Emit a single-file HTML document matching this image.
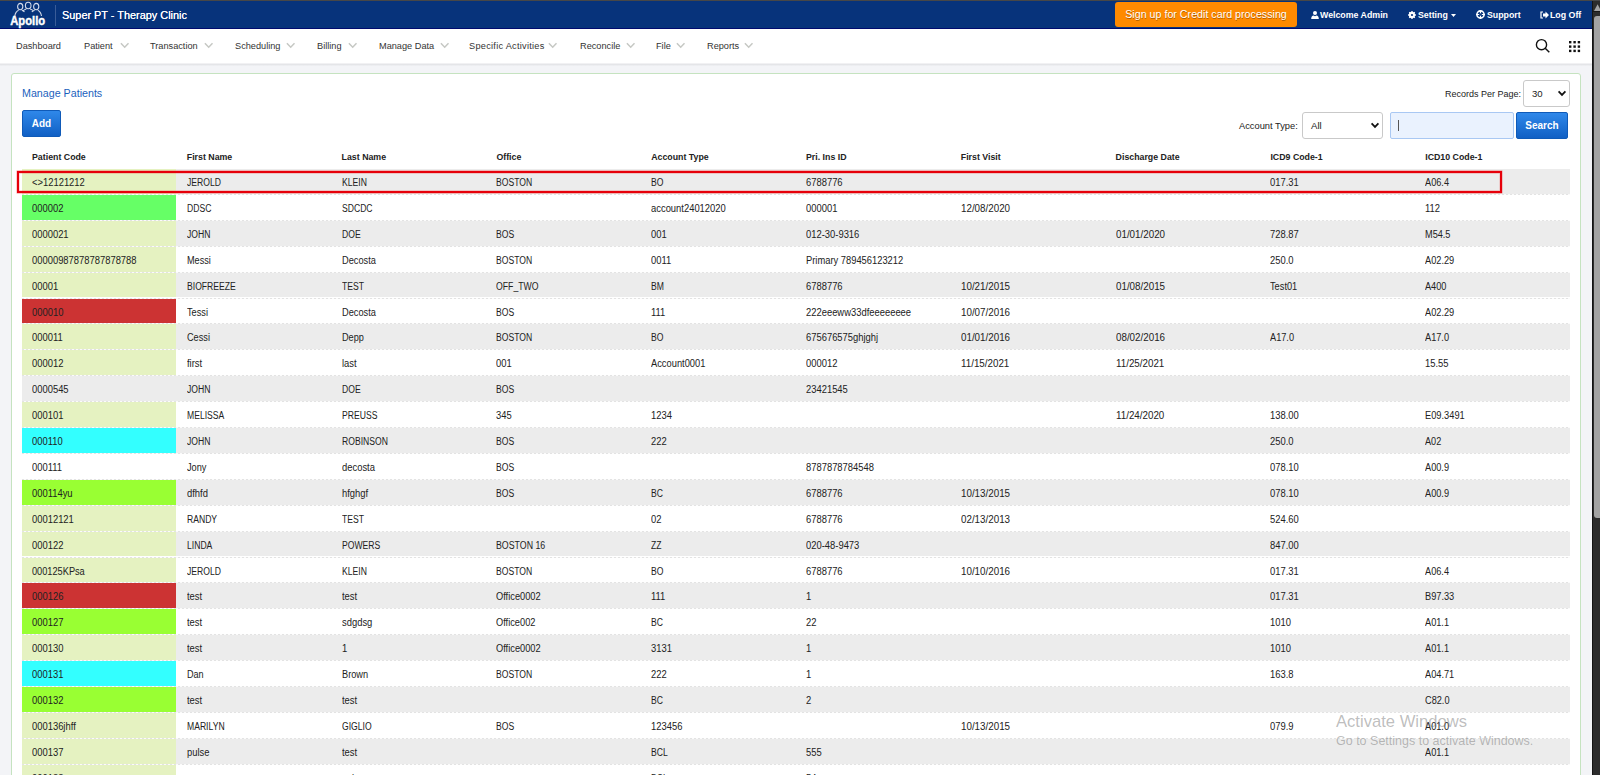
<!DOCTYPE html>
<html><head><meta charset="utf-8">
<style>
*{box-sizing:border-box;margin:0;padding:0}
html,body{width:1600px;height:775px;overflow:hidden;background:#f3f4f7;font-family:"Liberation Sans",sans-serif;color:#222}
.abs{position:absolute}
#topline{left:0;top:0;width:1600px;height:1px;background:#474747;z-index:6}
#hdr{left:0;top:1px;width:1592px;height:27px;background:#07337b}
#hdrline{left:0;top:28px;width:1592px;height:1px;background:#000a6e}
#sep{left:55px;top:5px;width:1px;height:21px;background:#3a5c98}
#title{left:62px;top:9px;font-size:10.9px;color:#fff;white-space:nowrap;line-height:13px;text-shadow:0 0 0.4px #fff}
#orange{left:1115px;top:2px;width:182px;height:25px;background:#ff8a00;border-radius:3px;color:#fff;font-size:10.7px;line-height:25px;text-shadow:0 0.5px 0.5px rgba(0,0,0,0.35);text-align:center;white-space:nowrap}
.hi{position:absolute;top:9.5px;color:#fff;font-size:8.8px;font-weight:bold;line-height:11px;white-space:nowrap}
#nav{left:0;top:29px;width:1592px;height:34px;background:#fff}
#navshadow{left:0;top:63px;width:1592px;height:3px;background:linear-gradient(#f7f7f8,#e4e5e8 50%,#f1f2f5)}
.navi{position:absolute;top:40px;font-size:9.2px;color:#333;white-space:nowrap;line-height:12px}
.chev{position:absolute;top:41.6px}
#sb{left:1592px;top:0;width:8px;height:775px;background:#2c2c2c;border-left:1px solid #141414}
#thumb{left:1594px;top:15.5px;width:6px;height:502px;background:#a3a3a3;border-radius:3px 0 0 3px}
#panel{left:11px;top:73px;width:1570px;height:760px;background:#fff;border:1px solid #c5e3c0;border-radius:3px}
#mp{left:22px;top:87px;font-size:10.7px;color:#1c5fbd;line-height:13px;white-space:nowrap}
.btn{position:absolute;height:26px;border-radius:2px;background:linear-gradient(#2f88ea,#1160c4);color:#fff;font-weight:bold;font-size:10px;text-align:center;line-height:26px;border:1px solid #0f5ab8}
.lbl{position:absolute;font-size:9.3px;color:#222;white-space:nowrap;line-height:11px}
.sel{position:absolute;height:26px;border:1px solid #c9c9c9;border-radius:3px;background:#fff;font-size:9.6px;color:#222;line-height:25px;padding-left:8px}
.sel svg{position:absolute;right:2px;top:9px}
#inp{left:1390px;top:112px;width:124px;height:26.5px;background:#eaf2fe;border:1px solid #a9c8f3;border-radius:2px}
#caret{left:1398px;top:120px;width:1px;height:11px;background:#555}
#tbl{left:22px;top:0;width:1548px}
.th{position:absolute;top:151.5px;font-size:8.8px;font-weight:bold;color:#222;white-space:nowrap;line-height:11px}
.tr{position:absolute;left:22px;width:1548px;height:25.9px;background:#fff}
.tr::after{content:"";position:absolute;left:0;top:0;width:100%;height:1px;background:repeating-linear-gradient(90deg,#e3e3e3 0 2px,#fbfbfb 2px 4px);z-index:2}
.tr.g{background:#ececec}
.tr.first::after{background:#fff}
.td{position:absolute;top:0;height:25.9px;line-height:29px;padding-left:10px;font-size:10px;color:#222;white-space:nowrap}
.td span{display:inline-block;transform-origin:0 50%}
.td.c0{left:0;width:154px}
#redbox{z-index:3;left:17px;top:171px;width:1485px;height:22px;border:2px solid #e6000a;box-shadow:0 0 0.6px 0.4px rgba(235,40,40,0.55),inset 0 0 0.6px 0.4px rgba(235,40,40,0.4)}
#wm1{left:1336px;top:712px;font-size:16.6px;z-index:5;color:rgba(110,110,110,0.45);white-space:nowrap;line-height:19px}
#wm2{left:1336px;top:734px;font-size:12.5px;z-index:5;color:rgba(110,110,110,0.45);white-space:nowrap;line-height:14px}
</style></head><body>
<div class="abs" id="topline"></div>
<div class="abs" id="hdr"></div>
<div class="abs" id="hdrline"></div>
<svg class="abs" style="left:8px;top:1px" width="40" height="28" viewBox="0 0 40 28">
 <g fill="none" stroke="#d0d8e8" stroke-width="1.1">
  <ellipse cx="12.2" cy="5.6" rx="2.6" ry="3.2"/><ellipse cx="20.2" cy="4.5" rx="2.8" ry="3.3"/><ellipse cx="28.2" cy="5.6" rx="2.6" ry="3.2"/>
  <path d="M10.6 9.2 Q7.5 10.5 6.8 15 M13.8 9.2 Q15.5 9.8 16.5 11 M18.3 8 Q16 8.8 15 10 M22.1 8 Q24.5 8.8 25.4 10 M26.6 9.2 Q24.8 9.8 23.8 11 M29.8 9.2 Q32.8 10.5 33.5 15"/>
 </g>
 <text x="2.2" y="24.3" style="font-family:'Liberation Sans';font-weight:bold" font-size="13.6" fill="#fff" stroke="#fff" stroke-width="0.45" textLength="35" lengthAdjust="spacingAndGlyphs">Apollo</text>
</svg>
<div class="abs" id="sep"></div>
<div class="abs" id="title">Super PT - Therapy Clinic</div>
<div class="abs" id="orange">Sign up for Credit card processing</div>
<svg class="abs" style="left:1311px;top:10.5px" width="8" height="8" viewBox="0 0 8 8"><circle cx="4" cy="2.1" r="2" fill="#fff"/><path d="M0.2 8 Q0.2 4.6 2.6 4.4 L4 5.2 L5.4 4.4 Q7.8 4.6 7.8 8Z" fill="#fff"/></svg>
<div class="hi" style="left:1320px">Welcome Admin</div>
<svg class="abs" style="left:1408px;top:10.5px" width="8" height="8" viewBox="0 0 8 8"><circle cx="4" cy="4" r="2.3" fill="none" stroke="#fff" stroke-width="1.7"/><g stroke="#fff" stroke-width="1.3"><path d="M4 0.1V7.9M0.1 4H7.9M1.25 1.25L6.75 6.75M6.75 1.25L1.25 6.75"/></g><circle cx="4" cy="4" r="1.1" fill="#07337b"/></svg>
<div class="hi" style="left:1418px">Setting</div>
<svg class="abs" style="left:1451px;top:14px" width="5" height="3" viewBox="0 0 5 3"><path d="M0 0H5L2.5 3Z" fill="#fff"/></svg>
<svg class="abs" style="left:1476px;top:10px" width="9" height="9" viewBox="0 0 9 9"><circle cx="4.5" cy="4.5" r="3.6" fill="none" stroke="#fff" stroke-width="1.6"/><path d="M4.5 0V9M0 4.5H9" stroke="#fff" stroke-width="1.2"/><circle cx="4.5" cy="4.5" r="1.3" fill="#07337b"/></svg>
<div class="hi" style="left:1487px">Support</div>
<svg class="abs" style="left:1540px;top:11px" width="9" height="8" viewBox="0 0 9 8"><path d="M3 1H1V7H3" fill="none" stroke="#fff" stroke-width="1.2"/><path d="M3 2.5H5.5V0.5L9 4L5.5 7.5V5.5H3Z" fill="#fff"/></svg>
<div class="hi" style="left:1550px">Log Off</div>

<div class="abs" id="nav"></div>
<div class="abs" id="navshadow"></div>
<div class="navi" style="left:16px">Dashboard</div>
<div class="navi" style="left:84px">Patient</div>
<div class="navi" style="left:150px">Transaction</div>
<div class="navi" style="left:235px">Scheduling</div>
<div class="navi" style="left:317px">Billing</div>
<div class="navi" style="left:379px">Manage Data</div>
<div class="navi" style="left:469px;letter-spacing:0.27px">Specific Activities</div>
<div class="navi" style="left:580px">Reconcile</div>
<div class="navi" style="left:656px">File</div>
<div class="navi" style="left:707px">Reports</div>
<svg class="chev" style="left:120px" width="10" height="7" viewBox="0 0 10 7"><path d="M0.9 1.2L4.7 5.2L8.5 1.2" fill="none" stroke="#c6c8c4" stroke-width="1.5"/></svg>
<svg class="chev" style="left:204px" width="10" height="7" viewBox="0 0 10 7"><path d="M0.9 1.2L4.7 5.2L8.5 1.2" fill="none" stroke="#c6c8c4" stroke-width="1.5"/></svg>
<svg class="chev" style="left:286px" width="10" height="7" viewBox="0 0 10 7"><path d="M0.9 1.2L4.7 5.2L8.5 1.2" fill="none" stroke="#c6c8c4" stroke-width="1.5"/></svg>
<svg class="chev" style="left:348px" width="10" height="7" viewBox="0 0 10 7"><path d="M0.9 1.2L4.7 5.2L8.5 1.2" fill="none" stroke="#c6c8c4" stroke-width="1.5"/></svg>
<svg class="chev" style="left:440px" width="10" height="7" viewBox="0 0 10 7"><path d="M0.9 1.2L4.7 5.2L8.5 1.2" fill="none" stroke="#c6c8c4" stroke-width="1.5"/></svg>
<svg class="chev" style="left:548px" width="10" height="7" viewBox="0 0 10 7"><path d="M0.9 1.2L4.7 5.2L8.5 1.2" fill="none" stroke="#c6c8c4" stroke-width="1.5"/></svg>
<svg class="chev" style="left:626px" width="10" height="7" viewBox="0 0 10 7"><path d="M0.9 1.2L4.7 5.2L8.5 1.2" fill="none" stroke="#c6c8c4" stroke-width="1.5"/></svg>
<svg class="chev" style="left:676px" width="10" height="7" viewBox="0 0 10 7"><path d="M0.9 1.2L4.7 5.2L8.5 1.2" fill="none" stroke="#c6c8c4" stroke-width="1.5"/></svg>
<svg class="chev" style="left:744px" width="10" height="7" viewBox="0 0 10 7"><path d="M0.9 1.2L4.7 5.2L8.5 1.2" fill="none" stroke="#c6c8c4" stroke-width="1.5"/></svg>
<svg class="abs" style="left:1535px;top:38px" width="16" height="16" viewBox="0 0 16 16"><circle cx="6.5" cy="6.7" r="5.1" fill="none" stroke="#111" stroke-width="1.4"/><path d="M10.2 10.3L14.3 14.2" stroke="#111" stroke-width="1.5"/></svg>
<svg class="abs" style="left:1569px;top:41px" width="12" height="12" viewBox="0 0 12 12" fill="#111"><rect x="0" y="0" width="2.4" height="2.4"/><rect x="4.4" y="0" width="2.4" height="2.4"/><rect x="8.7" y="0" width="2.4" height="2.4"/><rect x="0" y="4.4" width="2.4" height="2.4"/><rect x="4.4" y="4.4" width="2.4" height="2.4"/><rect x="8.7" y="4.4" width="2.4" height="2.4"/><rect x="0" y="8.7" width="2.4" height="2.4"/><rect x="4.4" y="8.7" width="2.4" height="2.4"/><rect x="8.7" y="8.7" width="2.4" height="2.4"/></svg>

<div class="abs" id="panel"></div>
<div class="abs" id="mp">Manage Patients</div>
<div class="btn" style="left:22px;top:110px;width:39px;height:27px">Add</div>
<div class="lbl" style="left:1445px;top:89px;font-size:9px">Records Per Page:</div>
<div class="sel" style="left:1523px;top:80px;width:47px;height:26.5px">30<svg width="10" height="7" viewBox="0 0 10 7"><path d="M1.6 1.4L5 4.9L8.4 1.4" fill="none" stroke="#111" stroke-width="1.8"/></svg></div>
<div class="lbl" style="left:1239px;top:120.5px">Account Type:</div>
<div class="sel" style="left:1302px;top:112px;width:81px;height:26.5px">All<svg width="10" height="7" viewBox="0 0 10 7"><path d="M1.6 1.4L5 4.9L8.4 1.4" fill="none" stroke="#111" stroke-width="1.8"/></svg></div>
<div class="abs" id="inp"></div>
<div class="abs" id="caret"></div>
<div class="btn" style="left:1516px;top:112px;width:52px;height:26.5px">Search</div>

<div class="th" style="left:32.0px">Patient Code</div>
<div class="th" style="left:186.8px">First Name</div>
<div class="th" style="left:341.6px">Last Name</div>
<div class="th" style="left:496.4px">Office</div>
<div class="th" style="left:651.2px">Account Type</div>
<div class="th" style="left:806.0px">Pri. Ins ID</div>
<div class="th" style="left:960.8px">First Visit</div>
<div class="th" style="left:1115.6px">Discharge Date</div>
<div class="th" style="left:1270.4px">ICD9 Code-1</div>
<div class="th" style="left:1425.2px">ICD10 Code-1</div>
<div class="tr g first" style="top:168.0px">
<div class="td c0" style="background:#e5f2c1"><span style="transform:scaleX(0.940)">&lt;&gt;12121212</span></div>
<div class="td" style="left:154.8px"><span style="transform:scaleX(0.860)">JEROLD</span></div>
<div class="td" style="left:309.6px"><span style="transform:scaleX(0.860)">KLEIN</span></div>
<div class="td" style="left:464.4px"><span style="transform:scaleX(0.860)">BOSTON</span></div>
<div class="td" style="left:619.2px"><span style="transform:scaleX(0.860)">BO</span></div>
<div class="td" style="left:774.0px"><span style="transform:scaleX(0.940)">6788776</span></div>
<div class="td" style="left:928.8px"><span style="transform:scaleX(0.940)"></span></div>
<div class="td" style="left:1083.6px"><span style="transform:scaleX(0.940)"></span></div>
<div class="td" style="left:1238.4px"><span style="transform:scaleX(0.940)">017.31</span></div>
<div class="td" style="left:1393.2px"><span style="transform:scaleX(0.920)">A06.4</span></div>
</div>
<div class="tr" style="top:193.9px">
<div class="td c0" style="background:#66ff66"><span style="transform:scaleX(0.940)">000002</span></div>
<div class="td" style="left:154.8px"><span style="transform:scaleX(0.860)">DDSC</span></div>
<div class="td" style="left:309.6px"><span style="transform:scaleX(0.860)">SDCDC</span></div>
<div class="td" style="left:464.4px"><span style="transform:scaleX(0.940)"></span></div>
<div class="td" style="left:619.2px"><span style="transform:scaleX(0.940)">account24012020</span></div>
<div class="td" style="left:774.0px"><span style="transform:scaleX(0.940)">000001</span></div>
<div class="td" style="left:928.8px"><span style="transform:scaleX(0.980)">12/08/2020</span></div>
<div class="td" style="left:1083.6px"><span style="transform:scaleX(0.940)"></span></div>
<div class="td" style="left:1238.4px"><span style="transform:scaleX(0.940)"></span></div>
<div class="td" style="left:1393.2px"><span style="transform:scaleX(0.940)">112</span></div>
</div>
<div class="tr g" style="top:219.8px">
<div class="td c0" style="background:#e5f2c1"><span style="transform:scaleX(0.940)">0000021</span></div>
<div class="td" style="left:154.8px"><span style="transform:scaleX(0.860)">JOHN</span></div>
<div class="td" style="left:309.6px"><span style="transform:scaleX(0.860)">DOE</span></div>
<div class="td" style="left:464.4px"><span style="transform:scaleX(0.860)">BOS</span></div>
<div class="td" style="left:619.2px"><span style="transform:scaleX(0.940)">001</span></div>
<div class="td" style="left:774.0px"><span style="transform:scaleX(0.940)">012-30-9316</span></div>
<div class="td" style="left:928.8px"><span style="transform:scaleX(0.940)"></span></div>
<div class="td" style="left:1083.6px"><span style="transform:scaleX(0.980)">01/01/2020</span></div>
<div class="td" style="left:1238.4px"><span style="transform:scaleX(0.940)">728.87</span></div>
<div class="td" style="left:1393.2px"><span style="transform:scaleX(0.916)">M54.5</span></div>
</div>
<div class="tr" style="top:245.7px">
<div class="td c0" style="background:#e5f2c1"><span style="transform:scaleX(0.940)">00000987878787878788</span></div>
<div class="td" style="left:154.8px"><span style="transform:scaleX(0.914)">Messi</span></div>
<div class="td" style="left:309.6px"><span style="transform:scaleX(0.924)">Decosta</span></div>
<div class="td" style="left:464.4px"><span style="transform:scaleX(0.860)">BOSTON</span></div>
<div class="td" style="left:619.2px"><span style="transform:scaleX(0.940)">0011</span></div>
<div class="td" style="left:774.0px"><span style="transform:scaleX(0.935)">Primary 789456123212</span></div>
<div class="td" style="left:928.8px"><span style="transform:scaleX(0.940)"></span></div>
<div class="td" style="left:1083.6px"><span style="transform:scaleX(0.940)"></span></div>
<div class="td" style="left:1238.4px"><span style="transform:scaleX(0.940)">250.0</span></div>
<div class="td" style="left:1393.2px"><span style="transform:scaleX(0.923)">A02.29</span></div>
</div>
<div class="tr g" style="top:271.6px">
<div class="td c0" style="background:#e5f2c1"><span style="transform:scaleX(0.940)">00001</span></div>
<div class="td" style="left:154.8px"><span style="transform:scaleX(0.860)">BIOFREEZE</span></div>
<div class="td" style="left:309.6px"><span style="transform:scaleX(0.860)">TEST</span></div>
<div class="td" style="left:464.4px"><span style="transform:scaleX(0.869)">OFF_TWO</span></div>
<div class="td" style="left:619.2px"><span style="transform:scaleX(0.860)">BM</span></div>
<div class="td" style="left:774.0px"><span style="transform:scaleX(0.940)">6788776</span></div>
<div class="td" style="left:928.8px"><span style="transform:scaleX(0.980)">10/21/2015</span></div>
<div class="td" style="left:1083.6px"><span style="transform:scaleX(0.980)">01/08/2015</span></div>
<div class="td" style="left:1238.4px"><span style="transform:scaleX(0.924)">Test01</span></div>
<div class="td" style="left:1393.2px"><span style="transform:scaleX(0.917)">A400</span></div>
</div>
<div class="tr" style="top:297.5px">
<div class="td c0" style="background:#cc3333"><span style="transform:scaleX(0.940)">000010</span></div>
<div class="td" style="left:154.8px"><span style="transform:scaleX(0.920)">Tessi</span></div>
<div class="td" style="left:309.6px"><span style="transform:scaleX(0.924)">Decosta</span></div>
<div class="td" style="left:464.4px"><span style="transform:scaleX(0.860)">BOS</span></div>
<div class="td" style="left:619.2px"><span style="transform:scaleX(0.940)">111</span></div>
<div class="td" style="left:774.0px"><span style="transform:scaleX(0.940)">222eeeww33dfeeeeeeee</span></div>
<div class="td" style="left:928.8px"><span style="transform:scaleX(0.980)">10/07/2016</span></div>
<div class="td" style="left:1083.6px"><span style="transform:scaleX(0.940)"></span></div>
<div class="td" style="left:1238.4px"><span style="transform:scaleX(0.940)"></span></div>
<div class="td" style="left:1393.2px"><span style="transform:scaleX(0.923)">A02.29</span></div>
</div>
<div class="tr g" style="top:323.4px">
<div class="td c0" style="background:#e5f2c1"><span style="transform:scaleX(0.940)">000011</span></div>
<div class="td" style="left:154.8px"><span style="transform:scaleX(0.917)">Cessi</span></div>
<div class="td" style="left:309.6px"><span style="transform:scaleX(0.916)">Depp</span></div>
<div class="td" style="left:464.4px"><span style="transform:scaleX(0.860)">BOSTON</span></div>
<div class="td" style="left:619.2px"><span style="transform:scaleX(0.860)">BO</span></div>
<div class="td" style="left:774.0px"><span style="transform:scaleX(0.940)">675676575ghjghj</span></div>
<div class="td" style="left:928.8px"><span style="transform:scaleX(0.980)">01/01/2016</span></div>
<div class="td" style="left:1083.6px"><span style="transform:scaleX(0.980)">08/02/2016</span></div>
<div class="td" style="left:1238.4px"><span style="transform:scaleX(0.920)">A17.0</span></div>
<div class="td" style="left:1393.2px"><span style="transform:scaleX(0.920)">A17.0</span></div>
</div>
<div class="tr" style="top:349.3px">
<div class="td c0" style="background:#e5f2c1"><span style="transform:scaleX(0.940)">000012</span></div>
<div class="td" style="left:154.8px"><span style="transform:scaleX(0.940)">first</span></div>
<div class="td" style="left:309.6px"><span style="transform:scaleX(0.940)">last</span></div>
<div class="td" style="left:464.4px"><span style="transform:scaleX(0.940)">001</span></div>
<div class="td" style="left:619.2px"><span style="transform:scaleX(0.931)">Account0001</span></div>
<div class="td" style="left:774.0px"><span style="transform:scaleX(0.940)">000012</span></div>
<div class="td" style="left:928.8px"><span style="transform:scaleX(0.980)">11/15/2021</span></div>
<div class="td" style="left:1083.6px"><span style="transform:scaleX(0.980)">11/25/2021</span></div>
<div class="td" style="left:1238.4px"><span style="transform:scaleX(0.940)"></span></div>
<div class="td" style="left:1393.2px"><span style="transform:scaleX(0.940)">15.55</span></div>
</div>
<div class="tr g" style="top:375.2px">
<div class="td c0"><span style="transform:scaleX(0.940)">0000545</span></div>
<div class="td" style="left:154.8px"><span style="transform:scaleX(0.860)">JOHN</span></div>
<div class="td" style="left:309.6px"><span style="transform:scaleX(0.860)">DOE</span></div>
<div class="td" style="left:464.4px"><span style="transform:scaleX(0.860)">BOS</span></div>
<div class="td" style="left:619.2px"><span style="transform:scaleX(0.940)"></span></div>
<div class="td" style="left:774.0px"><span style="transform:scaleX(0.940)">23421545</span></div>
<div class="td" style="left:928.8px"><span style="transform:scaleX(0.940)"></span></div>
<div class="td" style="left:1083.6px"><span style="transform:scaleX(0.940)"></span></div>
<div class="td" style="left:1238.4px"><span style="transform:scaleX(0.940)"></span></div>
<div class="td" style="left:1393.2px"><span style="transform:scaleX(0.940)"></span></div>
</div>
<div class="tr" style="top:401.1px">
<div class="td c0" style="background:#e5f2c1"><span style="transform:scaleX(0.940)">000101</span></div>
<div class="td" style="left:154.8px"><span style="transform:scaleX(0.860)">MELISSA</span></div>
<div class="td" style="left:309.6px"><span style="transform:scaleX(0.860)">PREUSS</span></div>
<div class="td" style="left:464.4px"><span style="transform:scaleX(0.940)">345</span></div>
<div class="td" style="left:619.2px"><span style="transform:scaleX(0.940)">1234</span></div>
<div class="td" style="left:774.0px"><span style="transform:scaleX(0.940)"></span></div>
<div class="td" style="left:928.8px"><span style="transform:scaleX(0.940)"></span></div>
<div class="td" style="left:1083.6px"><span style="transform:scaleX(0.980)">11/24/2020</span></div>
<div class="td" style="left:1238.4px"><span style="transform:scaleX(0.940)">138.00</span></div>
<div class="td" style="left:1393.2px"><span style="transform:scaleX(0.928)">E09.3491</span></div>
</div>
<div class="tr g" style="top:427.0px">
<div class="td c0" style="background:#33ffff"><span style="transform:scaleX(0.940)">000110</span></div>
<div class="td" style="left:154.8px"><span style="transform:scaleX(0.860)">JOHN</span></div>
<div class="td" style="left:309.6px"><span style="transform:scaleX(0.860)">ROBINSON</span></div>
<div class="td" style="left:464.4px"><span style="transform:scaleX(0.860)">BOS</span></div>
<div class="td" style="left:619.2px"><span style="transform:scaleX(0.940)">222</span></div>
<div class="td" style="left:774.0px"><span style="transform:scaleX(0.940)"></span></div>
<div class="td" style="left:928.8px"><span style="transform:scaleX(0.940)"></span></div>
<div class="td" style="left:1083.6px"><span style="transform:scaleX(0.940)"></span></div>
<div class="td" style="left:1238.4px"><span style="transform:scaleX(0.940)">250.0</span></div>
<div class="td" style="left:1393.2px"><span style="transform:scaleX(0.910)">A02</span></div>
</div>
<div class="tr" style="top:452.9px">
<div class="td c0"><span style="transform:scaleX(0.940)">000111</span></div>
<div class="td" style="left:154.8px"><span style="transform:scaleX(0.921)">Jony</span></div>
<div class="td" style="left:309.6px"><span style="transform:scaleX(0.940)">decosta</span></div>
<div class="td" style="left:464.4px"><span style="transform:scaleX(0.860)">BOS</span></div>
<div class="td" style="left:619.2px"><span style="transform:scaleX(0.940)"></span></div>
<div class="td" style="left:774.0px"><span style="transform:scaleX(0.940)">8787878784548</span></div>
<div class="td" style="left:928.8px"><span style="transform:scaleX(0.940)"></span></div>
<div class="td" style="left:1083.6px"><span style="transform:scaleX(0.940)"></span></div>
<div class="td" style="left:1238.4px"><span style="transform:scaleX(0.940)">078.10</span></div>
<div class="td" style="left:1393.2px"><span style="transform:scaleX(0.920)">A00.9</span></div>
</div>
<div class="tr g" style="top:478.8px">
<div class="td c0" style="background:#99ff33"><span style="transform:scaleX(0.940)">000114yu</span></div>
<div class="td" style="left:154.8px"><span style="transform:scaleX(0.940)">dfhfd</span></div>
<div class="td" style="left:309.6px"><span style="transform:scaleX(0.940)">hfghgf</span></div>
<div class="td" style="left:464.4px"><span style="transform:scaleX(0.860)">BOS</span></div>
<div class="td" style="left:619.2px"><span style="transform:scaleX(0.860)">BC</span></div>
<div class="td" style="left:774.0px"><span style="transform:scaleX(0.940)">6788776</span></div>
<div class="td" style="left:928.8px"><span style="transform:scaleX(0.980)">10/13/2015</span></div>
<div class="td" style="left:1083.6px"><span style="transform:scaleX(0.940)"></span></div>
<div class="td" style="left:1238.4px"><span style="transform:scaleX(0.940)">078.10</span></div>
<div class="td" style="left:1393.2px"><span style="transform:scaleX(0.920)">A00.9</span></div>
</div>
<div class="tr" style="top:504.7px">
<div class="td c0" style="background:#e5f2c1"><span style="transform:scaleX(0.940)">00012121</span></div>
<div class="td" style="left:154.8px"><span style="transform:scaleX(0.860)">RANDY</span></div>
<div class="td" style="left:309.6px"><span style="transform:scaleX(0.860)">TEST</span></div>
<div class="td" style="left:464.4px"><span style="transform:scaleX(0.940)"></span></div>
<div class="td" style="left:619.2px"><span style="transform:scaleX(0.940)">02</span></div>
<div class="td" style="left:774.0px"><span style="transform:scaleX(0.940)">6788776</span></div>
<div class="td" style="left:928.8px"><span style="transform:scaleX(0.980)">02/13/2013</span></div>
<div class="td" style="left:1083.6px"><span style="transform:scaleX(0.940)"></span></div>
<div class="td" style="left:1238.4px"><span style="transform:scaleX(0.940)">524.60</span></div>
<div class="td" style="left:1393.2px"><span style="transform:scaleX(0.940)"></span></div>
</div>
<div class="tr g" style="top:530.6px">
<div class="td c0" style="background:#e5f2c1"><span style="transform:scaleX(0.940)">000122</span></div>
<div class="td" style="left:154.8px"><span style="transform:scaleX(0.860)">LINDA</span></div>
<div class="td" style="left:309.6px"><span style="transform:scaleX(0.860)">POWERS</span></div>
<div class="td" style="left:464.4px"><span style="transform:scaleX(0.880)">BOSTON 16</span></div>
<div class="td" style="left:619.2px"><span style="transform:scaleX(0.860)">ZZ</span></div>
<div class="td" style="left:774.0px"><span style="transform:scaleX(0.940)">020-48-9473</span></div>
<div class="td" style="left:928.8px"><span style="transform:scaleX(0.940)"></span></div>
<div class="td" style="left:1083.6px"><span style="transform:scaleX(0.940)"></span></div>
<div class="td" style="left:1238.4px"><span style="transform:scaleX(0.940)">847.00</span></div>
<div class="td" style="left:1393.2px"><span style="transform:scaleX(0.940)"></span></div>
</div>
<div class="tr" style="top:556.5px">
<div class="td c0" style="background:#e5f2c1"><span style="transform:scaleX(0.921)">000125KPsa</span></div>
<div class="td" style="left:154.8px"><span style="transform:scaleX(0.860)">JEROLD</span></div>
<div class="td" style="left:309.6px"><span style="transform:scaleX(0.860)">KLEIN</span></div>
<div class="td" style="left:464.4px"><span style="transform:scaleX(0.860)">BOSTON</span></div>
<div class="td" style="left:619.2px"><span style="transform:scaleX(0.860)">BO</span></div>
<div class="td" style="left:774.0px"><span style="transform:scaleX(0.940)">6788776</span></div>
<div class="td" style="left:928.8px"><span style="transform:scaleX(0.980)">10/10/2016</span></div>
<div class="td" style="left:1083.6px"><span style="transform:scaleX(0.940)"></span></div>
<div class="td" style="left:1238.4px"><span style="transform:scaleX(0.940)">017.31</span></div>
<div class="td" style="left:1393.2px"><span style="transform:scaleX(0.920)">A06.4</span></div>
</div>
<div class="tr g" style="top:582.4px">
<div class="td c0" style="background:#cc3333"><span style="transform:scaleX(0.940)">000126</span></div>
<div class="td" style="left:154.8px"><span style="transform:scaleX(0.940)">test</span></div>
<div class="td" style="left:309.6px"><span style="transform:scaleX(0.940)">test</span></div>
<div class="td" style="left:464.4px"><span style="transform:scaleX(0.927)">Office0002</span></div>
<div class="td" style="left:619.2px"><span style="transform:scaleX(0.940)">111</span></div>
<div class="td" style="left:774.0px"><span style="transform:scaleX(0.940)">1</span></div>
<div class="td" style="left:928.8px"><span style="transform:scaleX(0.940)"></span></div>
<div class="td" style="left:1083.6px"><span style="transform:scaleX(0.940)"></span></div>
<div class="td" style="left:1238.4px"><span style="transform:scaleX(0.940)">017.31</span></div>
<div class="td" style="left:1393.2px"><span style="transform:scaleX(0.923)">B97.33</span></div>
</div>
<div class="tr" style="top:608.3px">
<div class="td c0" style="background:#99ff33"><span style="transform:scaleX(0.940)">000127</span></div>
<div class="td" style="left:154.8px"><span style="transform:scaleX(0.940)">test</span></div>
<div class="td" style="left:309.6px"><span style="transform:scaleX(0.940)">sdgdsg</span></div>
<div class="td" style="left:464.4px"><span style="transform:scaleX(0.925)">Office002</span></div>
<div class="td" style="left:619.2px"><span style="transform:scaleX(0.860)">BC</span></div>
<div class="td" style="left:774.0px"><span style="transform:scaleX(0.940)">22</span></div>
<div class="td" style="left:928.8px"><span style="transform:scaleX(0.940)"></span></div>
<div class="td" style="left:1083.6px"><span style="transform:scaleX(0.940)"></span></div>
<div class="td" style="left:1238.4px"><span style="transform:scaleX(0.940)">1010</span></div>
<div class="td" style="left:1393.2px"><span style="transform:scaleX(0.920)">A01.1</span></div>
</div>
<div class="tr g" style="top:634.2px">
<div class="td c0" style="background:#e5f2c1"><span style="transform:scaleX(0.940)">000130</span></div>
<div class="td" style="left:154.8px"><span style="transform:scaleX(0.940)">test</span></div>
<div class="td" style="left:309.6px"><span style="transform:scaleX(0.940)">1</span></div>
<div class="td" style="left:464.4px"><span style="transform:scaleX(0.927)">Office0002</span></div>
<div class="td" style="left:619.2px"><span style="transform:scaleX(0.940)">3131</span></div>
<div class="td" style="left:774.0px"><span style="transform:scaleX(0.940)">1</span></div>
<div class="td" style="left:928.8px"><span style="transform:scaleX(0.940)"></span></div>
<div class="td" style="left:1083.6px"><span style="transform:scaleX(0.940)"></span></div>
<div class="td" style="left:1238.4px"><span style="transform:scaleX(0.940)">1010</span></div>
<div class="td" style="left:1393.2px"><span style="transform:scaleX(0.920)">A01.1</span></div>
</div>
<div class="tr" style="top:660.1px">
<div class="td c0" style="background:#33ffff"><span style="transform:scaleX(0.940)">000131</span></div>
<div class="td" style="left:154.8px"><span style="transform:scaleX(0.909)">Dan</span></div>
<div class="td" style="left:309.6px"><span style="transform:scaleX(0.921)">Brown</span></div>
<div class="td" style="left:464.4px"><span style="transform:scaleX(0.860)">BOSTON</span></div>
<div class="td" style="left:619.2px"><span style="transform:scaleX(0.940)">222</span></div>
<div class="td" style="left:774.0px"><span style="transform:scaleX(0.940)">1</span></div>
<div class="td" style="left:928.8px"><span style="transform:scaleX(0.940)"></span></div>
<div class="td" style="left:1083.6px"><span style="transform:scaleX(0.940)"></span></div>
<div class="td" style="left:1238.4px"><span style="transform:scaleX(0.940)">163.8</span></div>
<div class="td" style="left:1393.2px"><span style="transform:scaleX(0.923)">A04.71</span></div>
</div>
<div class="tr g" style="top:686.0px">
<div class="td c0" style="background:#99ff33"><span style="transform:scaleX(0.940)">000132</span></div>
<div class="td" style="left:154.8px"><span style="transform:scaleX(0.940)">test</span></div>
<div class="td" style="left:309.6px"><span style="transform:scaleX(0.940)">test</span></div>
<div class="td" style="left:464.4px"><span style="transform:scaleX(0.940)"></span></div>
<div class="td" style="left:619.2px"><span style="transform:scaleX(0.860)">BC</span></div>
<div class="td" style="left:774.0px"><span style="transform:scaleX(0.940)">2</span></div>
<div class="td" style="left:928.8px"><span style="transform:scaleX(0.940)"></span></div>
<div class="td" style="left:1083.6px"><span style="transform:scaleX(0.940)"></span></div>
<div class="td" style="left:1238.4px"><span style="transform:scaleX(0.940)"></span></div>
<div class="td" style="left:1393.2px"><span style="transform:scaleX(0.918)">C82.0</span></div>
</div>
<div class="tr" style="top:711.9px">
<div class="td c0" style="background:#e5f2c1"><span style="transform:scaleX(0.940)">000136jhff</span></div>
<div class="td" style="left:154.8px"><span style="transform:scaleX(0.860)">MARILYN</span></div>
<div class="td" style="left:309.6px"><span style="transform:scaleX(0.860)">GIGLIO</span></div>
<div class="td" style="left:464.4px"><span style="transform:scaleX(0.860)">BOS</span></div>
<div class="td" style="left:619.2px"><span style="transform:scaleX(0.940)">123456</span></div>
<div class="td" style="left:774.0px"><span style="transform:scaleX(0.940)"></span></div>
<div class="td" style="left:928.8px"><span style="transform:scaleX(0.980)">10/13/2015</span></div>
<div class="td" style="left:1083.6px"><span style="transform:scaleX(0.940)"></span></div>
<div class="td" style="left:1238.4px"><span style="transform:scaleX(0.940)">079.9</span></div>
<div class="td" style="left:1393.2px"><span style="transform:scaleX(0.920)">A01.0</span></div>
</div>
<div class="tr g" style="top:737.8px">
<div class="td c0" style="background:#e5f2c1"><span style="transform:scaleX(0.940)">000137</span></div>
<div class="td" style="left:154.8px"><span style="transform:scaleX(0.940)">pulse</span></div>
<div class="td" style="left:309.6px"><span style="transform:scaleX(0.940)">test</span></div>
<div class="td" style="left:464.4px"><span style="transform:scaleX(0.940)"></span></div>
<div class="td" style="left:619.2px"><span style="transform:scaleX(0.860)">BCL</span></div>
<div class="td" style="left:774.0px"><span style="transform:scaleX(0.940)">555</span></div>
<div class="td" style="left:928.8px"><span style="transform:scaleX(0.940)"></span></div>
<div class="td" style="left:1083.6px"><span style="transform:scaleX(0.940)"></span></div>
<div class="td" style="left:1238.4px"><span style="transform:scaleX(0.940)"></span></div>
<div class="td" style="left:1393.2px"><span style="transform:scaleX(0.920)">A01.1</span></div>
</div>
<div class="tr" style="top:763.7px">
<div class="td c0" style="background:#e5f2c1"><span style="transform:scaleX(0.940)">000138</span></div>
<div class="td" style="left:154.8px"><span style="transform:scaleX(0.940)"></span></div>
<div class="td" style="left:309.6px"><span style="transform:scaleX(0.940)">sak</span></div>
<div class="td" style="left:464.4px"><span style="transform:scaleX(0.940)"></span></div>
<div class="td" style="left:619.2px"><span style="transform:scaleX(0.860)">BCL</span></div>
<div class="td" style="left:774.0px"><span style="transform:scaleX(0.940)">54</span></div>
<div class="td" style="left:928.8px"><span style="transform:scaleX(0.940)"></span></div>
<div class="td" style="left:1083.6px"><span style="transform:scaleX(0.940)"></span></div>
<div class="td" style="left:1238.4px"><span style="transform:scaleX(0.940)"></span></div>
<div class="td" style="left:1393.2px"><span style="transform:scaleX(0.940)"></span></div>
</div>
<div class="abs" id="redbox"></div>
<div class="abs" id="wm1">Activate Windows</div>
<div class="abs" id="wm2">Go to Settings to activate Windows.</div>

<div class="abs" id="sb"></div>
<div class="abs" id="thumb"></div>
<svg class="abs" style="left:1593px;top:3px" width="7" height="9" viewBox="0 0 7 9"><path d="M1 8L4.6 1.2L8.2 8Z" fill="#a3a3a3"/><rect x="0" y="8.3" width="7" height="0.9" fill="#111"/></svg>
</body></html>
